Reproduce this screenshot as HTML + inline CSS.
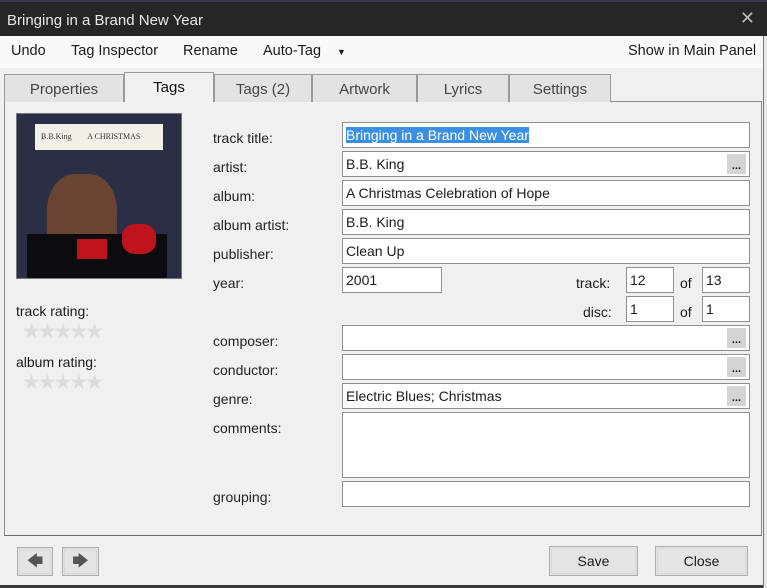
<!DOCTYPE html><html><head><style>
*{box-sizing:border-box;margin:0;padding:0}
body{width:767px;height:588px;overflow:hidden;background:#f0f0f0;font-family:"Liberation Sans",sans-serif;font-size:14px;color:#1a1a1a;position:relative}
.a{position:absolute}
.title{left:0;top:0;width:767px;height:36px;background:#262626;border-top:2px solid #3a3650;color:#e8e8e8;font-size:15px;padding:10px 0 0 7px}
.menu{left:0;top:36px;width:767px;height:32px;background:#f9f9f9;font-size:14.5px}
.menu span{position:absolute;top:7px}
.tab{top:74px;height:28px;background:#e3e3e3;border:1px solid #9a9a9a;border-bottom:none;font-size:15px;color:#444;text-align:center;padding-top:6px}
.panel{left:4px;top:101px;width:758px;height:435px;border:1px solid #8a8a8a;border-bottom:1px solid #6a6a6a;background:#f0f0f0}
.lbl{left:213px;font-size:14px;color:#222}
.in{background:#fff;border:1px solid #8f8f8f;height:26px;font-size:14px;padding:4px 3px}
.dots{position:absolute;right:3px;top:2px;width:19px;height:20px;background:#d4d4d4;font-size:11px;font-weight:bold;text-align:center;line-height:24px}
.btn{background:#e4e4e4;border:1px solid #adadad;outline:1px solid #d8d8d8;outline-offset:-3px;text-align:center;font-size:14px}
.stars{color:#dcdcdc;font-size:21px;letter-spacing:-3px}
</style></head><body>
<div class="a title">Bringing in a Brand New Year<span style="position:absolute;right:12px;top:6px;font-size:18px;color:#bbb">✕</span></div>
<div class="a menu"><span style="left:11px">Undo</span><span style="left:71px">Tag Inspector</span><span style="left:183px">Rename</span><span style="left:263px">Auto-Tag</span><span style="left:337px;font-size:9px;top:11px">▼</span><span style="left:628px">Show in Main Panel</span></div>
<div class="a panel"></div>
<div class="a tab" style="left:4px;width:120px">Properties</div>
<div class="a tab" style="left:124px;top:72px;height:30px;width:90px;background:#f0f0f0;color:#111">Tags</div>
<div class="a tab" style="left:214px;width:98px">Tags (2)</div>
<div class="a tab" style="left:312px;width:105px">Artwork</div>
<div class="a tab" style="left:417px;width:92px">Lyrics</div>
<div class="a tab" style="left:509px;width:102px">Settings</div>
<div class="a" style="left:16px;top:113px;width:166px;height:166px;background:#2a2f45;border:1px solid #777;overflow:hidden">
<div class="a" style="left:18px;top:10px;width:128px;height:26px;background:#f2efe6;font-family:'Liberation Serif',serif;font-size:8px;color:#333;padding:8px 0 0 6px">B.B.King &nbsp;&nbsp;&nbsp;&nbsp;&nbsp;&nbsp; A CHRISTMAS</div>
<div class="a" style="left:30px;top:60px;width:70px;height:90px;border-radius:40% 40% 20% 20%;background:#6a4432"></div>
<div class="a" style="left:10px;top:120px;width:140px;height:50px;background:#0c0c10"></div>
<div class="a" style="left:60px;top:125px;width:30px;height:20px;background:#c0141c"></div>
<div class="a" style="left:105px;top:110px;width:34px;height:30px;background:#c0141c;border-radius:40%"></div>
</div>
<div class="a" style="left:16px;top:303px">track rating:</div>
<div class="a stars" style="left:22px;top:319px">★★★★★</div>
<div class="a" style="left:16px;top:354px">album rating:</div>
<div class="a stars" style="left:22px;top:370px">★★★★★</div>
<div class="a lbl" style="top:130px">track title:</div>
<div class="a lbl" style="top:159px">artist:</div>
<div class="a lbl" style="top:188px">album:</div>
<div class="a lbl" style="top:217px">album artist:</div>
<div class="a lbl" style="top:246px">publisher:</div>
<div class="a lbl" style="top:275px">year:</div>
<div class="a lbl" style="top:333px">composer:</div>
<div class="a lbl" style="top:362px">conductor:</div>
<div class="a lbl" style="top:391px">genre:</div>
<div class="a lbl" style="top:420px">comments:</div>
<div class="a lbl" style="top:489px">grouping:</div>
<div class="a in" style="left:342px;top:122px;width:408px"><span style="background:#3b8fe0;color:#fff">Bringing in a Brand New Year</span></div>
<div class="a in" style="left:342px;top:151px;width:408px">B.B. King<div class="dots">...</div></div>
<div class="a in" style="left:342px;top:180px;width:408px">A Christmas Celebration of Hope</div>
<div class="a in" style="left:342px;top:209px;width:408px">B.B. King</div>
<div class="a in" style="left:342px;top:238px;width:408px">Clean Up</div>
<div class="a in" style="left:342px;top:267px;width:100px">2001</div>
<div class="a" style="left:576px;top:275px">track:</div>
<div class="a" style="left:583px;top:304px">disc:</div>
<div class="a" style="left:680px;top:275px">of</div>
<div class="a" style="left:680px;top:304px">of</div>
<div class="a in" style="left:626px;top:267px;width:48px">12</div>
<div class="a in" style="left:702px;top:267px;width:48px">13</div>
<div class="a in" style="left:626px;top:296px;width:48px">1</div>
<div class="a in" style="left:702px;top:296px;width:48px">1</div>
<div class="a in" style="left:342px;top:325px;width:408px"><div class="dots">...</div></div>
<div class="a in" style="left:342px;top:354px;width:408px"><div class="dots">...</div></div>
<div class="a in" style="left:342px;top:383px;width:408px">Electric Blues; Christmas<div class="dots">...</div></div>
<div class="a in" style="left:342px;top:412px;width:408px;height:66px"></div>
<div class="a in" style="left:342px;top:481px;width:408px"></div>
<div class="a btn" style="left:17px;top:547px;width:36px;height:29px;font-size:16px;color:#555;line-height:27px">🡄</div>
<div class="a btn" style="left:62px;top:547px;width:37px;height:29px;font-size:16px;color:#555;line-height:27px">🡆</div>
<div class="a btn" style="left:549px;top:546px;width:89px;height:30px;line-height:28px">Save</div>
<div class="a btn" style="left:655px;top:546px;width:93px;height:30px;line-height:28px">Close</div>
<div class="a" style="left:0;top:585px;width:767px;height:3px;background:#3a3a3a"></div>
<div class="a" style="left:763px;top:36px;width:4px;height:552px;background:#e8e8e8;border-left:1px solid #777"></div>
</body></html>
